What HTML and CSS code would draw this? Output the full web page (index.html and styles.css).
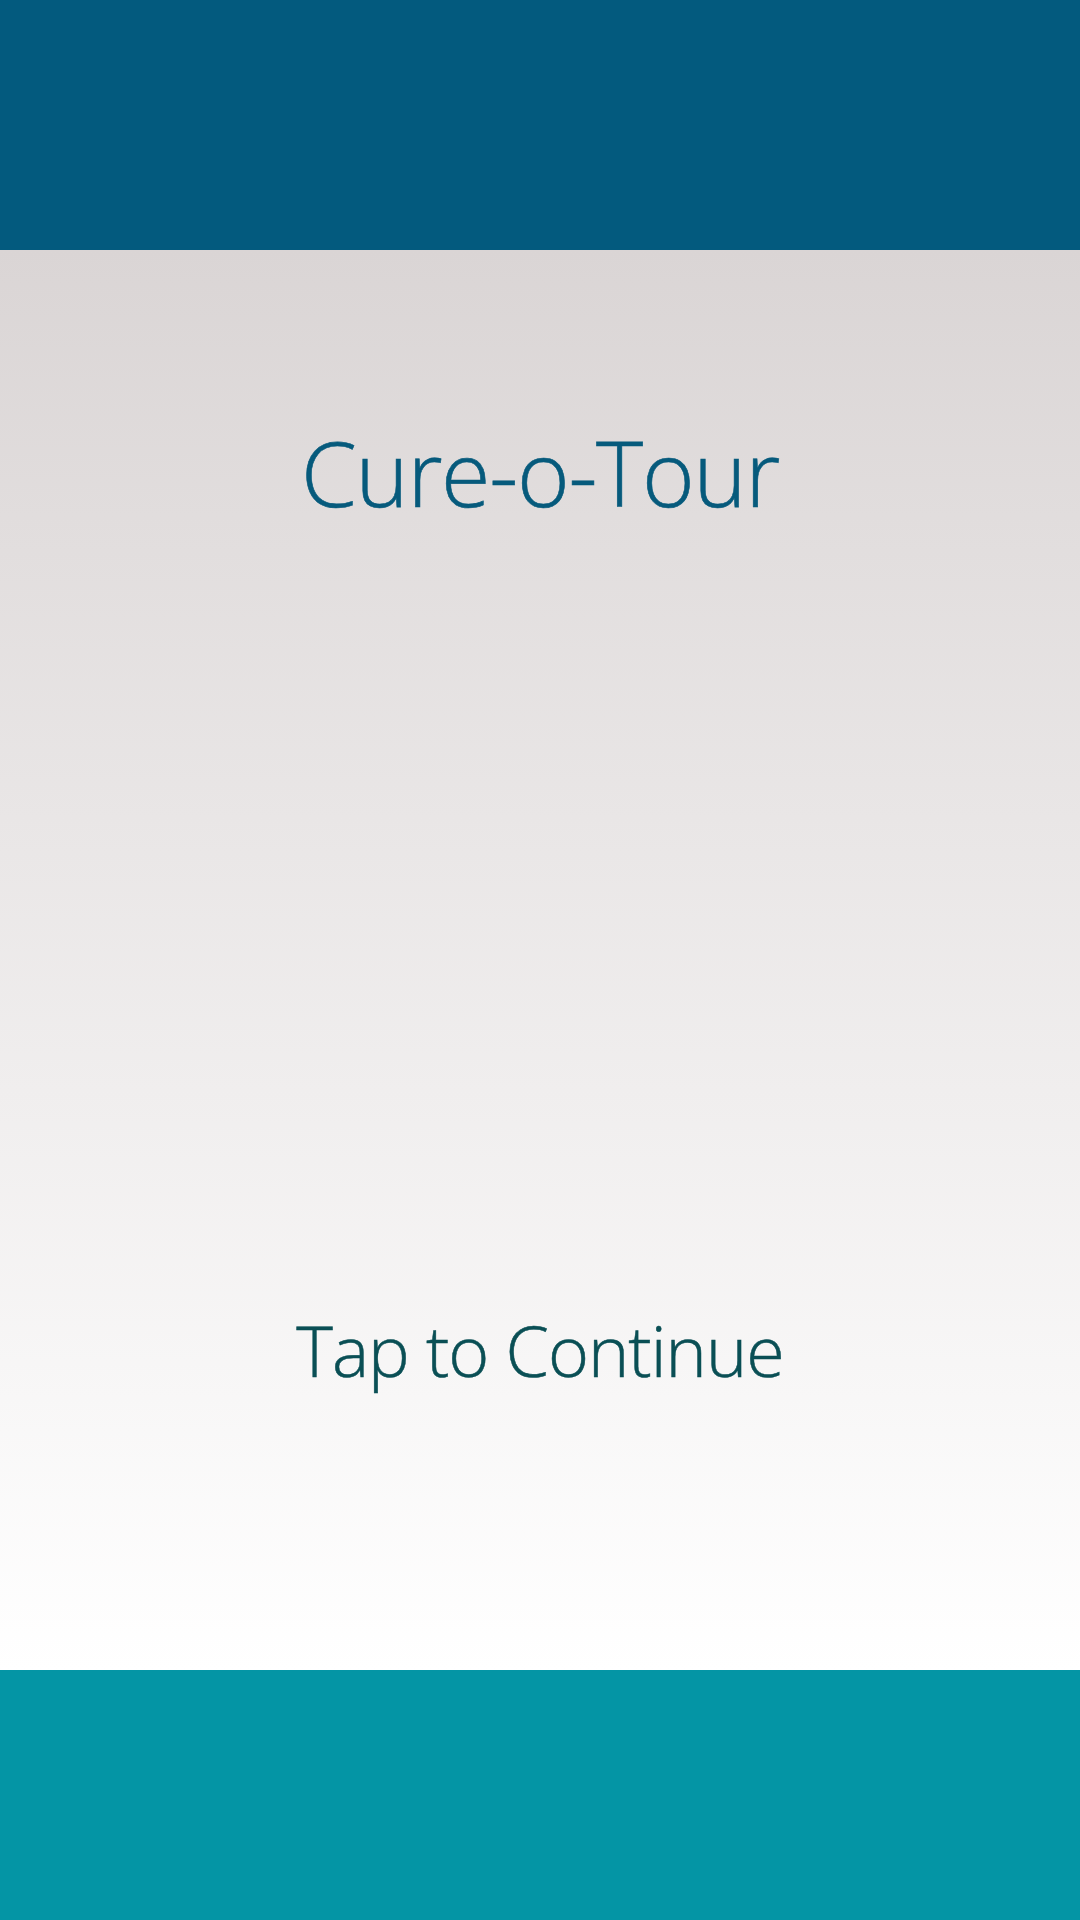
FILE: index.html
```html
<!DOCTYPE html>
<html>
<head>
<meta charset="utf-8">
<link rel="stylesheet" href="styles.css">
</head>
<body>
<div class="app">
  <header class="top-bar"></header>
  <main class="content">
    <h1 class="title">Cure-o-Tour</h1>
    <div class="spacer"></div>
    <p class="tap">Tap to Continue</p>
  </main>
  <footer class="bottom-bar"></footer>
</div>
</body>
</html>
```
FILE: styles.css
```css
html, body {
  margin: 0;
  padding: 0;
}
body {
  width: 1080px;
  height: 1920px;
  font-family: "Open Sans", "Noto Sans", sans-serif;
}
.app {
  display: flex;
  flex-direction: column;
  height: 1920px;
}
.top-bar {
  height: 250px;
  background: #035a7e;
}
.bottom-bar {
  height: 250px;
  background: #0495a5;
}
.content {
  flex: 1;
  display: flex;
  flex-direction: column;
  align-items: center;
  background: linear-gradient(to bottom, #dad5d5 0%, #e9e6e6 40%, #ffffff 100%);
}
.title {
  margin: 0;
  margin-top: 172px;
  font-weight: 300;
  font-size: 90px;
  line-height: 100px;
  letter-spacing: -1.3px;
  color: #065a7c;
  -webkit-text-stroke: 0.6px #065a7c;
}
.spacer {
  flex: 1;
}
.tap {
  margin: 0 0 280px 0;
  font-weight: 300;
  font-size: 70px;
  line-height: 80px;
  letter-spacing: -1px;
  color: #0a4f55;
  -webkit-text-stroke: 0.5px #0a4f55;
}
```
